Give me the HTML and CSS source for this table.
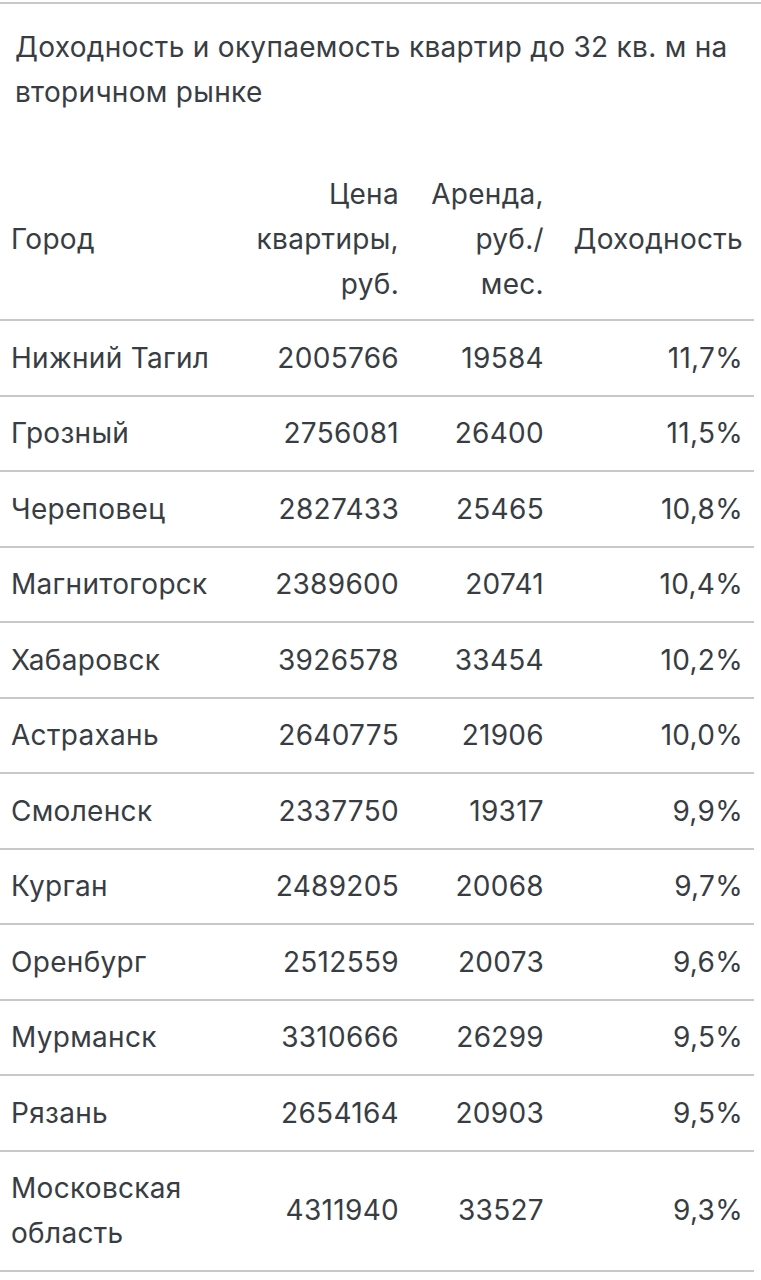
FILE: index.html
```html
<!DOCTYPE html>
<html lang="ru">
<head>
<meta charset="utf-8">
<link rel="stylesheet" href="styles.css">
</head>
<body>
<div class="page">
  <h1 class="title">Доходность и окупаемость квартир до 32 кв. м на вторичном рынке</h1>
  <table class="data">
    <colgroup>
      <col class="c1"><col class="c2"><col class="c3"><col class="c4">
    </colgroup>
    <thead>
      <tr>
        <th class="left">Город</th>
        <th>Цена квартиры, руб.</th>
        <th>Аренда, руб./ мес.</th>
        <th>Доходность</th>
      </tr>
    </thead>
    <tbody>
      <tr><td class="left">Нижний Тагил</td><td>2005766</td><td>19584</td><td>11,7%</td></tr>
      <tr><td class="left">Грозный</td><td>2756081</td><td>26400</td><td>11,5%</td></tr>
      <tr><td class="left">Череповец</td><td>2827433</td><td>25465</td><td>10,8%</td></tr>
      <tr><td class="left">Магнитогорск</td><td>2389600</td><td>20741</td><td>10,4%</td></tr>
      <tr><td class="left">Хабаровск</td><td>3926578</td><td>33454</td><td>10,2%</td></tr>
      <tr><td class="left">Астрахань</td><td>2640775</td><td>21906</td><td>10,0%</td></tr>
      <tr><td class="left">Смоленск</td><td>2337750</td><td>19317</td><td>9,9%</td></tr>
      <tr><td class="left">Курган</td><td>2489205</td><td>20068</td><td>9,7%</td></tr>
      <tr><td class="left">Оренбург</td><td>2512559</td><td>20073</td><td>9,6%</td></tr>
      <tr><td class="left">Мурманск</td><td>3310666</td><td>26299</td><td>9,5%</td></tr>
      <tr><td class="left">Рязань</td><td>2654164</td><td>20903</td><td>9,5%</td></tr>
      <tr><td class="left">Московская<br>область</td><td>4311940</td><td>33527</td><td>9,3%</td></tr>
    </tbody>
  </table>
</div>
</body>
</html>
```

FILE: styles.css
```css
html, body {
  margin: 0;
  padding: 0;
  background: #ffffff;
}
body {
  font-family: Inter, "Noto Sans", sans-serif;
  color: #383d43;
}
.page {
  border-top: 2px solid #c8c8c8;
  margin-top: 2px;
  width: 761px;
  overflow: hidden;
}
.title {
  font-size: 28px;
  font-weight: 400;
  line-height: 45px;
  margin: 21px 10px 0 15px;
  letter-spacing: 0.3px;
}
.data {
  margin-top: 50px;
  width: 754px;
  border-collapse: collapse;
  table-layout: fixed;
  font-size: 28px;
  line-height: 45px;
  letter-spacing: 0.3px;
}
.c1 { width: 232px; }
.c2 { width: 181px; }
.c3 { width: 145px; }
.c4 { width: 196px; }
.data th {
  font-weight: 400;
  text-align: right;
  vertical-align: middle;
  padding: 7px 14px 12px 6px;
  border-bottom: 2px solid #c8c8c8;
}
.data td {
  text-align: right;
  vertical-align: middle;
  padding: 14.5px 14px 14px 6px;
  border-bottom: 2px solid #c8c8c8;
  white-space: nowrap;
}
.data tbody tr:last-child td {
  padding-top: 14px;
  padding-bottom: 14px;
}
.data .left {
  text-align: left;
  padding-left: 11px;
}
.data td:last-child, .data th:last-child {
  padding-right: 11px;
}
```
